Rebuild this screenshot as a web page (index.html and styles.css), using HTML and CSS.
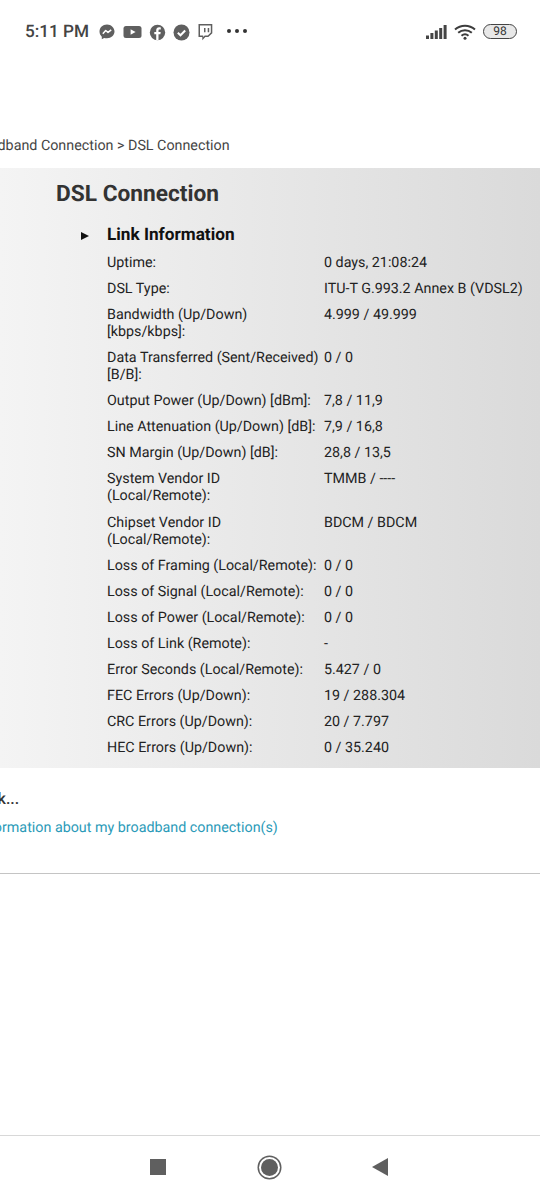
FILE: index.html
```html
<!DOCTYPE html>
<html lang="en">
<head>
    <meta charset="UTF-8">
    <meta name="viewport" content="width=device-width, initial-scale=1.0">
    <title>DSL Connection</title>
    <link rel="stylesheet" href="styles.css">
</head>
<body>
    <!-- Phone status bar -->
    <div class="status-bar">
        <span class="clock">5:11 PM</span>
        <div class="notif-icons">
            <svg width="18" height="18" viewBox="0 0 18 18"><path fill="#5f5f5f" d="M9 1.5C4.7 1.5 1.5 4.600 1.5 8.600c0 2.100.9 3.900 2.300 5.100v2.500l2.300-1.300c.9.300 1.900.4 2.900.4 4.300 0 7.500-3.100 7.500-6.700S13.300 1.500 9 1.500z"/><path fill="none" stroke="#fff" stroke-width="1.500" stroke-linejoin="round" d="M4.800 10.700l2.900-3.200 2.300 1.900 3.200-2.600"/></svg>
            <svg width="19" height="14" viewBox="0 0 19 14"><rect x="0.500" y="1" width="18" height="12" rx="2.500" fill="#5f5f5f"/><path fill="#fff" d="M7.600 4.200l5 2.800-5 2.800z"/></svg>
            <svg width="17" height="17" viewBox="0 0 17 17"><circle cx="8.500" cy="8.500" r="7.700" fill="#5f5f5f"/><path fill="#fff" d="M7.200 16.200V10.300H5.300V8H7.200V6.300c0-2 1.200-3 2.900-3 .8 0 1.500.1 1.700.1v2h-1.200c-.9 0-1.100.5-1.100 1.100V8h2.200l-.3 2.300H9.500v5.900z"/></svg>
            <svg width="17" height="17" viewBox="0 0 17 17"><circle cx="8.500" cy="8.500" r="8" fill="#5f5f5f"/><path fill="none" stroke="#fff" stroke-width="2" d="M4.800 8.700l2.700 2.600 4.700-4.800"/></svg>
            <svg width="16" height="18" viewBox="0 0 16 18"><path fill="#5f5f5f" d="M1.500 1h13.800v9.200l-4 3.800H8.300l-3 3.200v-3.200H1.500z"/><path fill="#fff" d="M3 2.500h10.800v7l-3 3H7.700l-1.500 1.600v-1.600H3z"/><path fill="#5f5f5f" d="M7 5h1.500v4.200H7zM10.700 5h1.500v4.200h-1.500z"/></svg>
        </div>
        <div class="dots"><i></i><i></i><i></i></div>
        <div class="status-right">
            <svg width="21" height="14" viewBox="0 0 21 14"><path fill="#444" d="M0 10.500h3V14H0zM4.400 8h3v6h-3zM8.800 5.500h3V14h-3zM13.200 3h3v11h-3zM17.600 0h3v14h-3z"/></svg>
            <svg width="22" height="16" viewBox="0 0 22 16"><g fill="none" stroke="#3c3c3c" stroke-width="2"><path d="M1 5.500c5.700-5 14.300-5 20 0"/><path d="M4.200 8.800c3.900-3.400 9.700-3.400 13.600 0"/><path d="M7.500 11.700c2-1.700 5-1.700 7 0"/></g><circle cx="11" cy="14.300" r="1.500" fill="#3c3c3c"/></svg>
            <span class="battery">98</span>
        </div>
    </div>

    <div class="page">
        <p class="breadcrumb">Broadband Connection &gt; DSL Connection</p>

        <div class="panel">
            <h1>DSL Connection</h1>
            <h2><span class="arrow"></span>Link Information</h2>
            <table class="info">
                <tr><td>Uptime:</td><td>0 days, 21:08:24</td></tr>
                <tr><td>DSL Type:</td><td>ITU-T G.993.2 Annex B (VDSL2)</td></tr>
                <tr><td>Bandwidth (Up/Down)<br>[kbps/kbps]:</td><td>4.999 / 49.999</td></tr>
                <tr><td>Data Transferred (Sent/Received)<br>[B/B]:</td><td>0 / 0</td></tr>
                <tr><td>Output Power (Up/Down) [dBm]:</td><td>7,8 / 11,9</td></tr>
                <tr><td>Line Attenuation (Up/Down) [dB]:</td><td>7,9 / 16,8</td></tr>
                <tr><td>SN Margin (Up/Down) [dB]:</td><td>28,8 / 13,5</td></tr>
                <tr><td>System Vendor ID<br>(Local/Remote):</td><td>TMMB / ----</td></tr>
                <tr><td>Chipset Vendor ID<br>(Local/Remote):</td><td>BDCM / BDCM</td></tr>
                <tr><td>Loss of Framing (Local/Remote):</td><td>0 / 0</td></tr>
                <tr><td>Loss of Signal (Local/Remote):</td><td>0 / 0</td></tr>
                <tr><td>Loss of Power (Local/Remote):</td><td>0 / 0</td></tr>
                <tr><td>Loss of Link (Remote):</td><td>-</td></tr>
                <tr><td>Error Seconds (Local/Remote):</td><td>5.427 / 0</td></tr>
                <tr><td>FEC Errors (Up/Down):</td><td>19 / 288.304</td></tr>
                <tr><td>CRC Errors (Up/Down):</td><td>20 / 7.797</td></tr>
                <tr><td>HEC Errors (Up/Down):</td><td>0 / 35.240</td></tr>
            </table>
        </div>

        <div class="help">
            <h3>I want to check...</h3>
            <a href="#">More information about my broadband connection(s)</a>
        </div>
    </div>

    <!-- Phone nav bar -->
    <div class="nav-bar">
        <span class="nav-square"></span>
        <span class="nav-home"></span>
        <span class="nav-back"></span>
    </div>
</body>
</html>
```

FILE: styles.css
```css
html, body {
    margin: 0;
    padding: 0;
}
body {
    width: 540px;
    height: 1200px;
    overflow: hidden;
    background-color: #fff;
    font-family: Roboto, Arial, sans-serif;
    font-size: 14.3px;
    line-height: 17px;
    color: #333;
    text-rendering: geometricPrecision;
    display: flex;
    flex-direction: column;
}
.status-bar {
    height: 62px;
    display: flex;
    align-items: center;
    padding: 0 23px 0 25px;
    box-sizing: border-box;
}
.clock {
    font-size: 17.2px;
    font-weight: 500;
    color: #444;
    margin: 2px 9px 0 0;
}
.notif-icons {
    display: flex;
    align-items: center;
    gap: 7px;
    margin-top: 2px;
}
.dots {
    display: flex;
    gap: 4px;
    margin-left: 14px;
}
.dots i {
    width: 4px;
    height: 4px;
    border-radius: 50%;
    background-color: #333;
}
.status-right {
    margin-left: auto;
    display: flex;
    align-items: center;
    gap: 7px;
    margin-top: 1px;
}
.battery {
    width: 32px;
    height: 13px;
    border: 1px solid #444;
    border-radius: 8px;
    background-color: #e8e8e8;
    font-size: 12px;
    line-height: 13px;
    text-align: center;
    color: #333;
}
.page {
    flex: 1;
}
.breadcrumb {
    margin: 76px 0 13px -32px;
    color: #444;
    white-space: nowrap;
}
.panel {
    height: 600px;
    box-sizing: border-box;
    padding-top: 12px;
    background: linear-gradient(to right, #f4f4f4, #dadada);
    color: #222;
}
h1 {
    margin: 0 0 0 56px;
    font-size: 22.7px;
    line-height: 27px;
    font-weight: 700;
    color: #333;
}
h2 {
    margin: 15px 0 6px 81px;
    display: flex;
    align-items: center;
    font-size: 17.2px;
    line-height: 27px;
    font-weight: 700;
    color: #111;
}
.arrow {
    width: 0;
    height: 0;
    border-left: 8px solid #111;
    border-top: 4px solid transparent;
    border-bottom: 4px solid transparent;
    margin-right: 18px;
}
.info {
    border-collapse: collapse;
    margin-left: 107px;
}
.info td {
    padding: 0 0 9px 0;
    vertical-align: top;
    white-space: nowrap;
    line-height: 17.05px;
}
.info td:first-child {
    width: 217px;
}
.help {
    height: 106px;
    box-sizing: border-box;
    padding-top: 21px;
    border-bottom: 1px solid #c4c4c4;
}
h3 {
    margin: 0 0 12px -102px;
    font-size: 16px;
    line-height: 19px;
    font-weight: 500;
    color: #333;
    white-space: nowrap;
}
.help a {
    display: block;
    margin-left: -59px;
    color: #2a9ab8;
    text-decoration: none;
    white-space: nowrap;
}
.nav-bar {
    height: 65px;
    box-sizing: border-box;
    border-top: 1px solid #d8d8d8;
    display: flex;
    align-items: center;
    padding-bottom: 2px;
}
.nav-square {
    width: 16px;
    height: 16px;
    background-color: #5f5f5f;
    margin-left: 150px;
}
.nav-home {
    width: 17px;
    height: 17px;
    margin-left: 95px;
    border-radius: 50%;
    background-color: #5f5f5f;
    box-shadow: 0 0 0 2px #fff, 0 0 0 3.5px #5f5f5f;
}
.nav-back {
    width: 0;
    height: 0;
    margin-left: 94px;
    border-right: 16px solid #5f5f5f;
    border-top: 9px solid transparent;
    border-bottom: 9px solid transparent;
}
```
